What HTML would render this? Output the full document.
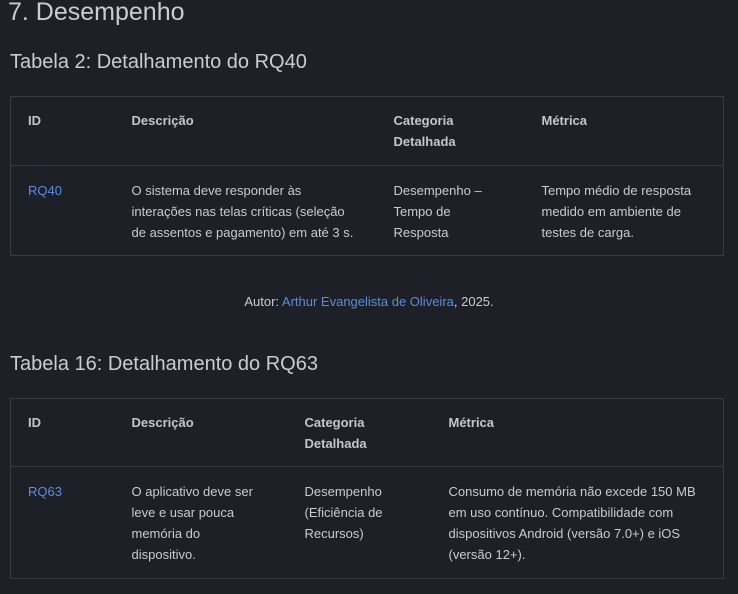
<!DOCTYPE html>
<html><head><meta charset="utf-8"><style>
body{margin:0;background:#1e2028;width:738px;height:594px;overflow:hidden;font-family:"Liberation Sans",sans-serif;color:#c8cbd2;position:relative}
.h1{position:absolute;left:8px;top:-2px;font-size:25px;font-weight:300;color:#c9ccd2;margin:0}
.h2{position:absolute;left:10px;font-size:20px;color:#c9ccd2;margin:0;font-weight:400}
table{position:absolute;left:10px;width:714px;border-collapse:collapse;border:1px solid #373a44;font-size:13px;table-layout:fixed}
td,th{text-align:left;vertical-align:top;padding:13px 2px 12px 17px;line-height:21px;white-space:nowrap}
td{padding-top:14px}
th{font-weight:bold;color:#c3c6cd;border-bottom:1px solid #373a44}
a{color:#5a8ce0;text-decoration:none}
.cap{position:absolute;top:294px;left:0;width:738px;text-align:center;font-size:13px}
</style></head><body>
<div class="h1">7. Desempenho</div>
<div class="h2" style="top:51px">Tabela 2: Detalhamento do RQ40</div>
<table style="top:96px;height:160px">
<colgroup><col style="width:104px"><col style="width:262px"><col style="width:148px"><col></colgroup>
<tr style="height:69px"><th>ID</th><th>Descrição</th><th>Categoria<br>Detalhada</th><th>Métrica</th></tr>
<tr><td><a>RQ40</a></td><td>O sistema deve responder às<br>interações nas telas críticas (seleção<br>de assentos e pagamento) em até 3 s.</td><td>Desempenho –<br>Tempo de<br>Resposta</td><td>Tempo médio de resposta<br>medido em ambiente de<br>testes de carga.</td></tr>
</table>
<div class="cap">Autor: <a>Arthur Evangelista de Oliveira</a>, 2025.</div>
<div class="h2" style="top:353px">Tabela 16: Detalhamento do RQ63</div>
<table style="top:398px;height:181px">
<colgroup><col style="width:104px"><col style="width:173px"><col style="width:144px"><col></colgroup>
<tr style="height:68px"><th>ID</th><th>Descrição</th><th>Categoria<br>Detalhada</th><th>Métrica</th></tr>
<tr><td><a>RQ63</a></td><td>O aplicativo deve ser<br>leve e usar pouca<br>memória do<br>dispositivo.</td><td>Desempenho<br>(Eficiência de<br>Recursos)</td><td>Consumo de memória não excede 150 MB<br>em uso contínuo. Compatibilidade com<br>dispositivos Android (versão 7.0+) e iOS<br>(versão 12+).</td></tr>
</table>
</body></html>
